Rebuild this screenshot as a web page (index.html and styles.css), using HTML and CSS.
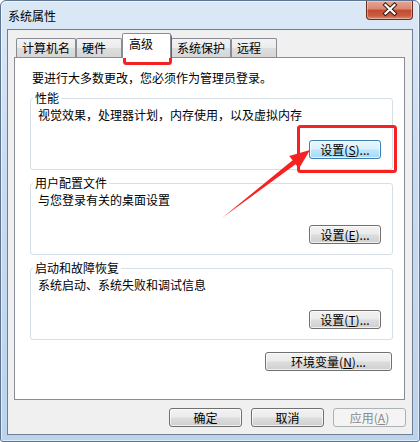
FILE: index.html
```html
<!DOCTYPE html>
<html lang="zh-CN">
<head>
    <meta charset="UTF-8">
    <title>系统属性</title>
    <link rel="stylesheet" href="styles.css">
</head>
<body>
    <div class="window">
        <div class="titlebar">
            <span class="title">系统属性</span>
            <div class="close">
                <svg width="47" height="19" viewBox="0 0 47 19">
                    <path d="M19.5 5 L28.5 13.5 M28.5 5 L19.5 13.5" stroke="#3a1a14" stroke-width="4.2" stroke-linecap="square" fill="none"/>
                    <path d="M19.5 5 L28.5 13.5 M28.5 5 L19.5 13.5" stroke="#ffffff" stroke-width="2.2" stroke-linecap="square" fill="none"/>
                </svg>
            </div>
        </div>

        <div class="client">
            <div class="tabs">
                <div class="tab">计算机名</div>
                <div class="tab">硬件</div>
                <div class="tab active">高级</div>
                <div class="tab">系统保护</div>
                <div class="tab">远程</div>
            </div>

            <div class="panel">
                <p class="notice">要进行大多数更改，您必须作为管理员登录。</p>

                <section class="group">
                    <h2 class="group-title">性能</h2>
                    <p class="group-desc">视觉效果，处理器计划，内存使用，以及虚拟内存</p>
                    <div class="group-actions">
                        <button class="btn focus">设置(<u>S</u>)...</button>
                    </div>
                </section>

                <section class="group">
                    <h2 class="group-title">用户配置文件</h2>
                    <p class="group-desc">与您登录有关的桌面设置</p>
                    <div class="group-actions">
                        <button class="btn">设置(<u>E</u>)...</button>
                    </div>
                </section>

                <section class="group">
                    <h2 class="group-title">启动和故障恢复</h2>
                    <p class="group-desc">系统启动、系统失败和调试信息</p>
                    <div class="group-actions">
                        <button class="btn">设置(<u>T</u>)...</button>
                    </div>
                </section>

                <div class="env-row">
                    <button class="btn wide">环境变量(<u>N</u>)...</button>
                </div>
            </div>

            <div class="footer">
                <button class="btn">确定</button>
                <button class="btn">取消</button>
                <button class="btn" disabled>应用(<u>A</u>)</button>
            </div>
        </div>

        <!-- 标注 -->
        <svg class="marks" width="420" height="442" viewBox="0 0 420 442">
            <rect x="124.5" y="35.5" width="46" height="28" rx="2" fill="none" stroke="#f42222" stroke-width="3"/>
            <rect x="298.5" y="126.5" width="97" height="45" rx="2" fill="none" stroke="#f42222" stroke-width="3"/>
            <polygon points="222,218 292.6,160.3 289.2,156 310,150 299,168.6 295.6,164.3" fill="#f42222"/>
        </svg>
    </div>
</body>
</html>
```

FILE: styles.css
```css
* { margin: 0; padding: 0; box-sizing: border-box; }
body {
    font-family: "Noto Sans CJK SC", sans-serif;
    font-size: 12px;
    color: #000;
    background: #fff;
}
.window {
    position: relative;
    width: 420px;
    height: 442px;
    border: 1px solid #5d7590;
    border-radius: 6px 6px 3px 3px;
    background: linear-gradient(to bottom, #dbe8f6 0%, #c9dbf0 40%, #bdd3ec 100%);
    box-shadow: inset 0 0 0 1px rgba(255,255,255,0.55);
    padding: 0 6px 6px;
    display: flex;
    flex-direction: column;
}
.titlebar {
    height: 28px;
    display: flex;
    align-items: flex-start;
}
.title {
    margin-left: 1px;
    padding-top: 7px;
    line-height: 16px;
}
.close {
    margin-left: auto;
    width: 47px;
    height: 19px;
    border: 1px solid #6b2b1f;
    border-top: none;
    border-radius: 0 0 4px 4px;
    background: linear-gradient(to bottom, #e7a696 0%, #d98771 45%, #c44a2f 50%, #c85a3e 80%, #dd8a6c 100%);
    box-shadow: inset 0 0 0 1px rgba(255,255,255,0.35);
}
.close svg { display: block; margin: -1px 0 0 -1px; }

.client {
    flex: 1;
    background: #f0f0f0;
    border: 1px solid #6e7f94;
    padding: 8px 7px 0 6px;
    display: flex;
    flex-direction: column;
}
.tabs {
    display: flex;
    align-items: flex-end;
    height: 19px;
    margin-left: 2px;
}
.tab {
    min-width: 46px;
    height: 19px;
    padding: 0 5px;
    line-height: 18px;
    border: 1px solid #898c95;
    border-bottom: none;
    border-radius: 2px 2px 0 0;
    background: linear-gradient(to bottom, #f3f3f3 0%, #ebebeb 50%, #dedede 51%, #d6d6d6 100%);
}
.tab.active {
    position: relative;
    z-index: 1;
    width: 49px;
    height: 25px;
    margin-bottom: -1px;
    padding: 0 6px;
    line-height: 20px;
    background: #fff;
}
.panel {
    height: 343px;
    background: #fff;
    border: 1px solid #898c95;
    padding: 12px 11px 0 15px;
}
.notice {
    line-height: 16px;
    margin-left: 2px;
}
.group {
    border: 1px solid #d5dfe5;
    border-radius: 3px;
    padding: 0 11px 10px 7px;
    margin-top: 13px;
}
.notice + .group { margin-top: 12px; }
.group-title {
    font-size: 12px;
    font-weight: normal;
    line-height: 14px;
    width: fit-content;
    margin: -8px 0 0 -5px;
    padding: 0 2px;
    background: #fff;
}
.group-desc {
    line-height: 16px;
    margin-top: 2px;
}
.group-actions {
    display: flex;
    justify-content: flex-end;
    margin-top: 17px;
}
.env-row {
    display: flex;
    justify-content: flex-end;
    margin: 12px 1px 0 0;
}
.btn {
    font-family: inherit;
    font-size: 12px;
    color: #000;
    width: 72px;
    height: 19px;
    line-height: 16px;
    border: 1px solid #707070;
    border-radius: 3px;
    background: linear-gradient(to bottom, #f2f2f2 0%, #ebebeb 48%, #dddddd 52%, #cfcfcf 100%);
    box-shadow: inset 0 0 0 1px rgba(255,255,255,0.7);
}
.btn u { text-decoration: underline; }
.btn.focus {
    border-color: #3c7fb1;
    background: linear-gradient(to bottom, #eaf6fd 0%, #d9f0fc 48%, #bee6fd 52%, #a7d9f5 100%);
}
.btn.wide { width: 127px; }
.btn:disabled {
    color: #8a8a8a;
    border-color: #adb2b5;
    background: #f4f4f4;
    box-shadow: none;
}
.footer {
    display: flex;
    justify-content: flex-end;
    gap: 9px;
    margin: 8px -1px 0 0;
}
.footer .btn { width: 73px; }
.marks {
    position: absolute;
    left: -1px;
    top: -1px;
    pointer-events: none;
}
```
